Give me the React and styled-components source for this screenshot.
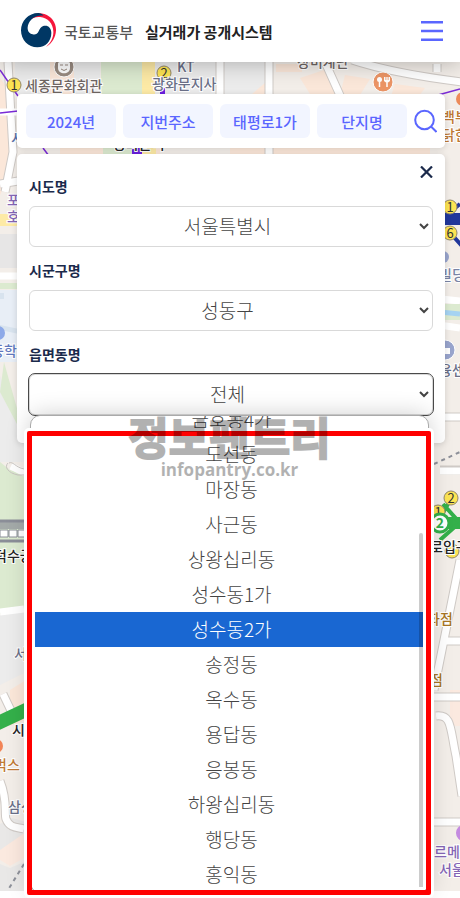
import { useState } from 'react';
import styled, { createGlobalStyle } from 'styled-components';

const CHIPS = ['2024년', '지번주소', '태평로1가', '단지명'];

const DONG_LIST = [
  '금호동4가',
  '도선동',
  '마장동',
  '사근동',
  '상왕십리동',
  '성수동1가',
  '성수동2가',
  '송정동',
  '옥수동',
  '용답동',
  '응봉동',
  '하왕십리동',
  '행당동',
  '홍익동',
];

const Logo = () => (
  <svg width="36" height="36" viewBox="0 0 108 108" aria-hidden="true">
    <path
      fill="#f5163b"
      d="M22 16C34 2 52-2 70 3c22 7 36 27 35 49-1 22-12 40-30 50 15-13 23-29 22-47C96 32 81 14 57 12c-14-1-26 4-37 14z"
    />
    <path
      fill="#003764"
      d="M52 0C22 0 0 24 0 52c0 29 22 51 49 51 25 0 42-19 42-43 0-14-8-22-18-22-12 0-16 8-20 17-4 8-10 11-18 9-10-2-16-10-15-21C22 27 33 13 50 9c6-2 12-2 18-1C64 3 58 0 52 0z"
    />
  </svg>
);

const MenuIcon = () => (
  <svg width="22" height="20" viewBox="0 0 22 20" stroke="#5a66ff" strokeWidth="2.4">
    <path d="M0 1.2h22M0 10h22M0 18.8h22" />
  </svg>
);

const SearchIcon = () => (
  <svg width="23" height="24" viewBox="0 0 23 24" fill="none" stroke="#5a66ff" strokeWidth="2">
    <circle cx="10.5" cy="11" r="9.3" />
    <path d="M17 17.5l5.5 5.5" />
  </svg>
);

const CloseIcon = () => (
  <svg width="13" height="12" viewBox="0 0 13 12" stroke="#1b2a4b" strokeWidth="2.2">
    <path d="M1 .5l11 11M12 .5l-11 11" />
  </svg>
);

const Station = ({ x, y, n }) => (
  <g>
    <circle cx={x} cy={y} r="7" fill="#fce453" stroke="#93876a" />
    {n && (
      <text x={x} y={y + 5} textAnchor="middle" fontSize="13" fill="#333">
        {n}
      </text>
    )}
  </g>
);

const Map = () => (
  <MapSvg viewBox="0 62 460 829" preserveAspectRatio="xMidYMin slice" aria-hidden="true">
    <rect y="62" width="460" height="829" fill="#f3eee9" />
    {/* blocks */}
    <path fill="#ececec" d="M15 62h85v32H15zM155 62h110v34H155zM0 376l24 60v26H0zM0 615l30-5v60L0 685z" />
    <path fill="#e7e6e6" d="M0 234h24v34H0z" />
    <path
      fill="#fbe7d9"
      d="M0 78l14 18v70L0 195zM50 62h24v32H50zM276 64h26v8h-26zM300 78l24-8 20 24h-34zM345 75l25 4-10 16h-20zM395 84l30 4-6 8h-28zM252 94l14-12v12zM10 690l16-10v40l-16 6zM60 148h100v8H60zM230 148h200v8H230z"
    />
    <path
      fill="#dcead0"
      d="M101 62h41v32h-41zM103 148h40v6h-40zM0 283h24v6H0zM4 362l14 50v14L0 392zM0 462l10 8 16 4v136l-26 4z"
    />
    <path fill="#fdeaa6" d="M142 62h13v32h-13zM142 148h14v6h-14zM0 214h24v12H0z" />
    <path fill="#e8eef6" d="M0 290h24v72H0z" />
    <path fill="#d8e3ee" d="M0 293h4v6H0zM0 325l24 5v5l-24-5z" />
    <path fill="#fbe9df" d="M450 690h10v36h-10zM0 850l24-22v30l-14 8-10-6z" />
    <path fill="#e9e8e7" d="M0 824l12-6 14 4v10L0 850zM0 864l10 4 14-6v30H0z" />
    {/* roads */}
    <g fill="none" stroke="#cfcac6" strokeWidth="9">
      <path d="M8 62l5 90-8 40M220 62v34" />
      <path d="M269 62v92M325 62l18 40M352 60c30 10 70 17 110 22M437 64v8M0 184l24-4M432 417h28M440 470h20" />
      <path d="M432 697h28M436 716c16-2 14 12 20 40l6 40M446 641h16M460 560l-26 130M430 822h32M3 694l12 25M0 781c8 20 4 32 6 38 4 10 12 8 18 10" />
    </g>
    <g fill="none" stroke="#fff" strokeWidth="7">
      <path d="M8 62l5 90-8 40M0 112h18M220 62v34" />
      <path d="M269 62v92M325 62l18 40M352 60c30 10 70 17 110 22M437 64v8M0 184l24-4M0 276h24M432 298l28 3M432 324l28 4M432 417h28M440 471h20" />
      <path d="M432 697h28M436 716c16-2 14 12 20 40l6 40M446 641h16M460 560l-26 130M430 822h32M3 694l12 25M0 781c8 20 4 32 6 38 4 10 12 8 18 10M0 612l24-3M11 466l14 7" />
    </g>
    <path fill="none" stroke="#c9c5c1" d="M8 463c-4 4 0 10 10 12h6M9 463c4-2 6 4 15 6" />
    <path fill="#dcead0" d="M440 304h20v16h-20z" />
    <path fill="none" stroke="#a5d3f2" strokeWidth="5" d="M440 312l20 2" />
    <path fill="none" stroke="#7a2bd6" strokeWidth="1.5" d="M0 70l18 26M0 113l18-2M438 95l22-6M43 148l6 8" />
    <path fill="#6b1fe0" d="M160 88h5v6h-5zM132 148h10v6h-10z" />
    <path fill="none" stroke="#8d9099" strokeWidth="2" strokeDasharray="4 4" d="M24 864L8 890M434 464l26-12" />
    <path fill="none" stroke="#8b8e98" strokeWidth="3" d="M0 521h24M0 541h24" />
    <path fill="#8b8e98" d="M0 522h24v7H0z" opacity="0.7" />
    <path fill="#fff" stroke="#8b8e98" d="M0 530h8v7H0zM9 530h8v7H9zM18 530h8v7h-8z" />
    {/* subway lines */}
    <path fill="none" stroke="#21379b" strokeWidth="12" d="M444 219h16" />
    <path fill="none" stroke="#21379b" strokeWidth="4" d="M455 208l5-4M453 236l9 10" />
    <path fill="none" stroke="#34b04a" strokeWidth="14" d="M-4 724l32-15" />
    <path fill="none" stroke="#34b04a" strokeWidth="12" d="M440 523h22" />
    <path fill="none" stroke="#34b04a" strokeWidth="4" d="M443 504l16 18M440 540l18-16M440 518l8-14" />
    {/* pins */}
    <circle cx="64" cy="67" r="10" fill="#998b81" stroke="#fff" />
    <path fill="#fff" d="M58 63c0-2 12-2 12 0v5c0 7-12 7-12 0z" />
    <path fill="none" stroke="#998b81" d="M60 65h3M65 65h3M61 69q3 3 6 0" />
    <circle cx="383" cy="82" r="10" fill="#ec9566" stroke="#fff" />
    <circle cx="379.500" cy="79.500" r="2.500" fill="#fff" />
    <path fill="none" stroke="#fff" strokeWidth="1.500" d="M379.500 80v7M387 80v7" />
    <path fill="#fff" d="M384 77h1.500v3h.8v-3h1.400v3h.8v-3H390v4q-3 3-6 0z" />
    <circle cx="463" cy="99" r="7" fill="#ec8a58" />
    <circle cx="-2" cy="333" r="7" fill="#8da9e8" />
    <circle cx="443" cy="257" r="6" fill="#98a4cc" />
    <circle cx="445" cy="350" r="10" fill="#98a4cc" stroke="#fff" />
    <path fill="#fff" d="M444 348h6v6h-6z" />
    <circle cx="-4" cy="746" r="7" fill="#f28457" />
    <circle cx="464" cy="833" r="8" fill="#c48be0" />
    <Station x={14} y={85} n="1" />
    <Station x={164} y={73} n="2" />
    <Station x={450} y={207} n="1" />
    <Station x={450} y={233} n="6" />
    <Station x={451} y={498} n="2" />
    <Station x={438} y={512} n="1" />
    <Station x={452} y={551} />
    <circle cx="440" cy="523" r="9" fill="#fff" stroke="#34b04a" strokeWidth="3" />
    <text x="440" y="528" textAnchor="middle" fontSize="14" fontWeight="700" fill="#34b04a">
      2
    </text>
    <MapLabel x="25" y="91" fill="#6f6663">세종문화회관</MapLabel>
    <MapLabel x="177" y="72" fill="#6b7088">KT</MapLabel>
    <MapLabel x="152" y="89" fill="#6b7088">광화문지사</MapLabel>
    <MapLabel x="297" y="67" fill="#6f6663">장미계단</MapLabel>
    <MapLabel x="442" y="122" fill="#bd7733">백부</MapLabel>
    <MapLabel x="442" y="140" fill="#bd7733">닭한</MapLabel>
    <MapLabel x="11" y="143" fill="#5870a8">시</MapLabel>
    <MapLabel x="113" y="149" fill="#222">광화문역</MapLabel>
    <MapLabel x="7" y="205" fill="#8566b5">포</MapLabel>
    <MapLabel x="7" y="222" fill="#8566b5">호</MapLabel>
    <MapLabel x="-9" y="356" fill="#5f78bd">등학</MapLabel>
    <MapLabel x="439" y="280" fill="#7a84a5">빌딩</MapLabel>
    <MapLabel x="439" y="375" fill="#6b7088">융센</MapLabel>
    <MapLabel x="-6" y="561" fill="#222">덕수궁</MapLabel>
    <MapLabel x="430" y="552" fill="#222">로입구</MapLabel>
    <MapLabel x="14" y="659" fill="#6b7088">서</MapLabel>
    <MapLabel x="427" y="624" fill="#a87524">화점</MapLabel>
    <MapLabel x="430" y="685" fill="#a87524">점</MapLabel>
    <MapLabel x="12" y="735" fill="#222">시</MapLabel>
    <MapLabel x="-6" y="770" fill="#c07a35">벅스</MapLabel>
    <MapLabel x="8" y="812" fill="#6b7088">삼성</MapLabel>
    <MapLabel x="434" y="857" fill="#8566b5">르메</MapLabel>
    <MapLabel x="439" y="875" fill="#8566b5">서울</MapLabel>
  </MapSvg>
);

const App = () => {
  const [sido, setSido] = useState('서울특별시');
  const [sigungu, setSigungu] = useState('성동구');
  const [dong, setDong] = useState('전체');
  const [active, setActive] = useState('성수동2가');

  return (
    <Page>
      <GlobalStyle />
      <Header>
        <Brand href="#">
          <Logo />
          <Ministry>국토교통부</Ministry>
          <SiteName>실거래가 공개시스템</SiteName>
        </Brand>
        <IconButton type="button" aria-label="메뉴">
          <MenuIcon />
        </IconButton>
      </Header>
      <Main>
        <Map />
        <SearchBar>
          {CHIPS.map(chip => (
            <Chip key={chip} type="button">
              {chip}
            </Chip>
          ))}
          <IconButton type="button" aria-label="검색">
            <SearchIcon />
          </IconButton>
        </SearchBar>
        <Panel>
          <Field>
            <LabelRow>
              <Label htmlFor="sido">시도명</Label>
              <CloseButton type="button" aria-label="닫기">
                <CloseIcon />
              </CloseButton>
            </LabelRow>
            <Select id="sido" value={sido} onChange={e => setSido(e.target.value)}>
              <option>서울특별시</option>
            </Select>
          </Field>
          <Field>
            <LabelRow>
              <Label htmlFor="sigungu">시군구명</Label>
            </LabelRow>
            <Select id="sigungu" value={sigungu} onChange={e => setSigungu(e.target.value)}>
              <option>성동구</option>
            </Select>
          </Field>
          <Field>
            <LabelRow>
              <Label htmlFor="dong">읍면동명</Label>
            </LabelRow>
            <Select id="dong" $open value={dong} onChange={e => setDong(e.target.value)}>
              <option>전체</option>
              {DONG_LIST.map(name => (
                <option key={name}>{name}</option>
              ))}
            </Select>
            <Popup>
              <Options role="listbox" aria-label="읍면동명">
                {DONG_LIST.map(name => (
                  <Option
                    key={name}
                    role="option"
                    aria-selected={name === active}
                    $active={name === active}
                    onMouseEnter={() => setActive(name)}
                    onClick={() => setDong(name)}
                  >
                    {name}
                  </Option>
                ))}
              </Options>
              <Thumb />
              <Highlight />
              <Watermark>
                <WatermarkTitle>정보팬트리</WatermarkTitle>
                <WatermarkUrl>infopantry.co.kr</WatermarkUrl>
              </Watermark>
            </Popup>
          </Field>
        </Panel>
      </Main>
    </Page>
  );
};

const GlobalStyle = createGlobalStyle`
  * {
    box-sizing: border-box;
  }

  body {
    margin: 0;
    background: #fff;
    font-family: 'Noto Sans CJK KR', sans-serif;
  }

  button, select {
    font-family: inherit;
  }
`;

const Page = styled.div`
  display: flex;
  flex-direction: column;
  min-height: 100vh;
  padding-bottom: 7px;
`;

const Header = styled.header`
  position: relative;
  z-index: 2;
  display: flex;
  flex: none;
  align-items: center;
  justify-content: space-between;
  height: 62px;
  padding: 0 17px 0 21px;
  background: #fff;
  box-shadow: 0 0 24px rgba(0, 0, 0, 0.3);
`;

const Brand = styled.a`
  display: flex;
  align-items: center;
  text-decoration: none;
`;

const Ministry = styled.span`
  margin-left: 7px;
  font-size: 15px;
  font-weight: 500;
  color: #555;
`;

const SiteName = styled.strong`
  margin-left: 12px;
  font-size: 15px;
  font-weight: 700;
  color: #222;
`;

const IconButton = styled.button`
  display: flex;
  padding: 0;
  border: 0;
  background: none;
  cursor: pointer;
`;

const Main = styled.main`
  position: relative;
  flex: 1;
  padding: 32px 15px 0 17px;
`;

const MapSvg = styled.svg`
  position: absolute;
  inset: 0;
  width: 100%;
  height: 100%;
`;

const MapLabel = styled.text`
  font-size: 14px;
  font-weight: 500;
  stroke: #fff;
  stroke-width: 2px;
  paint-order: stroke;
`;

const SearchBar = styled.div`
  position: relative;
  display: flex;
  align-items: center;
  gap: 7px;
  padding: 10px 8px 10px 9px;
  background: #fff;
  border-radius: 5px;
  box-shadow: 0 1px 6px rgba(0, 0, 0, 0.15);
`;

const Chip = styled.button`
  flex: 1;
  height: 34px;
  padding: 0;
  border: 0;
  border-radius: 6px;
  background: #f2f5ff;
  color: #5a66ff;
  font-size: 15px;
  font-weight: 500;
  white-space: nowrap;
`;

const Panel = styled.section`
  position: relative;
  display: flex;
  flex-direction: column;
  gap: 12px;
  margin-top: 6px;
  padding: 21px 12px 28px;
  background: #fff;
  border-radius: 5px;
  box-shadow: 0 1px 6px rgba(0, 0, 0, 0.15);
`;

const Field = styled.div`
  position: relative;
`;

const LabelRow = styled.div`
  display: flex;
  justify-content: space-between;
  height: 31px;
`;

const Label = styled.label`
  font-size: 14px;
  font-weight: 700;
  line-height: 22px;
  color: #1b2a4b;
`;

const CloseButton = styled(IconButton)`
  align-self: flex-start;
  margin-top: -9px;
`;

const Select = styled.select`
  display: block;
  width: 100%;
  height: 41px;
  padding: 0 0 2px 5px;
  border: 1px solid #d9d9d9;
  border-radius: 6px;
  outline: ${props => (props.$open ? '1px solid #4a4a4a' : 'none')};
  background: #fff;
  color: #444;
  font-size: 19px;
  font-weight: 300;
  text-align: center;
  text-align-last: center;
`;

const Popup = styled.div`
  position: absolute;
  z-index: 3;
  top: 100%;
  left: 1px;
  right: 4px;
  border: 1px solid #aaa;
  border-radius: 10px;
  background: #fff;
  box-shadow: 0 0 24px rgba(0, 0, 0, 0.2);
`;

const Options = styled.ul`
  display: flex;
  flex-direction: column;
  justify-content: flex-end;
  height: 476px;
  margin: 0;
  padding: 0 5px 0 4px;
  list-style: none;
  overflow: hidden;
`;

const Option = styled.li`
  flex: none;
  height: 35px;
  padding-left: 5px;
  background: ${props => (props.$active ? '#1967d2' : 'transparent')};
  color: ${props => (props.$active ? '#fff' : '#444')};
  font-size: 19px;
  font-weight: 300;
  line-height: 33px;
  text-align: center;
`;

const Thumb = styled.div`
  position: absolute;
  right: 5px;
  bottom: 5px;
  width: 4px;
  height: 354px;
  border-radius: 4px 4px 0 0;
  background: rgba(0, 0, 0, 0.2);
`;

const Highlight = styled.div`
  position: absolute;
  inset: 15px -3px -3px -4px;
  border: 5px solid #f00;
  border-radius: 2px;
  box-shadow: 0 0 0 3px #fff;
`;

const Watermark = styled.div`
  position: absolute;
  top: -4px;
  left: 0;
  right: 0;
  text-align: center;
  color: #000;
  opacity: 0.3;
  pointer-events: none;
`;

const WatermarkTitle = styled.div`
  font-size: 44px;
  font-weight: 700;
  line-height: 48px;
  -webkit-text-stroke: 2px #000;
`;

const WatermarkUrl = styled.div`
  font-family: 'Open Sans', sans-serif;
  font-size: 17px;
  font-weight: 700;
  line-height: 20px;
`;

export default App;
